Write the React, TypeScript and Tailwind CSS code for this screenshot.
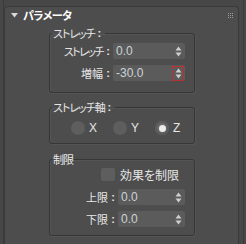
import React from "react";

const font = "[font-family:'Noto_Sans_CJK_JP','Noto_Sans',sans-serif] [font-feature-settings:'palt']";

function SpinArrows() {
  return (
    <svg width="7" height="11" viewBox="0 0 7 11" className="shrink-0">
      <path d="M3.5 0.5 L6.5 4.5 L0.5 4.5 Z" fill="#cfcfcf" />
      <path d="M3.5 10.5 L6.5 6.5 L0.5 6.5 Z" fill="#cfcfcf" />
    </svg>
  );
}

function Spinner({ value, width, focused }: { value: string; width: string; focused?: boolean }) {
  return (
    <div className={`${width} flex h-[16px] items-center justify-between rounded-[2px] bg-[#5b5b5b] pl-[3px] pr-[1px]`}>
      <span className="text-[12px] leading-none text-[#cdd3d6] [font-family:'Liberation_Sans',sans-serif]">{value}</span>
      <div
        className={`flex h-[15px] w-[12px] items-center justify-center ${
          focused ? "border border-dashed border-[#e02020]" : ""
        }`}
      >
        <SpinArrows />
      </div>
    </div>
  );
}

function Colon({ w = "w-[10px]" }: { w?: string }) {
  return <span className={`${w} text-center [font-family:'Liberation_Sans',sans-serif] font-bold`}>:</span>;
}

function Row({
  label,
  value,
  width,
  labelW,
  tight,
  focused,
}: {
  label: string;
  value: string;
  width: string;
  labelW: string;
  tight?: boolean;
  focused?: boolean;
}) {
  return (
    <div className="flex items-center text-[11px] leading-none text-[#e6e6e6]">
      <div className={`${labelW} text-right ${tight ? "tracking-[-1.5px]" : ""}`}>{label}</div>
      <Colon />
      <Spinner value={value} width={width} focused={focused} />
    </div>
  );
}

function Group({ title, colon, className, children }: { title: string; colon?: boolean; className: string; children: React.ReactNode }) {
  return (
    <fieldset className={`ml-[44px] w-[146px] rounded-[3px] border border-[#363636] shadow-[inset_1px_1px_0_#555555,1px_1px_0_#555555] ${className}`}>
      <legend className="ml-[2px] flex px-[1px] text-[11px] leading-[14px] text-[#e6e6e6]">
        <span className="tracking-[-1px]">{title}</span>
        {colon && <Colon w="w-[9px]" />}
      </legend>
      {children}
    </fieldset>
  );
}

function Radio({ label, checked }: { label: string; checked?: boolean }) {
  return (
    <div className="flex items-center gap-[4px]">
      <div
        className={`flex h-[14px] w-[14px] items-center justify-center rounded-full ${
          checked ? "bg-[#6a6a6a] shadow-[inset_0_0_0_2px_#5a5a5a]" : "bg-[#5e5e5e]"
        }`}
      >
        {checked && <div className="h-[7px] w-[7px] rounded-full bg-[#ececec]" />}
      </div>
      <span className="text-[12px] leading-none text-[#e6e6e6] [font-family:'Liberation_Sans',sans-serif]">{label}</span>
    </div>
  );
}

export default function App() {
  return (
    <div className={`relative h-[244px] w-[246px] overflow-hidden bg-[#474747] ${font}`}>
      <div className="absolute left-[3px] top-0 h-full w-px bg-[#3c3c3c]" />
      <div className="absolute left-[243px] top-0 h-full w-px bg-[#3a3a3a]" />
      <div className="ml-[4px] mt-[6px] h-[260px] w-[235px] rounded-t-[4px] border border-b-0 border-[#3a3a3a] bg-[#4d4d4d]">
        {/* header */}
        <div className="flex h-[16px] items-center pl-[6px]">
          <svg width="7" height="5" viewBox="0 0 7 5">
            <path d="M0 0 L7 0 L3.5 4.5 Z" fill="#d8d8d8" />
          </svg>
          <span className="ml-[5px] text-[11px] font-bold leading-none tracking-[-0.5px] text-white">パラメータ</span>
          <div className="ml-auto mr-[5px] grid grid-cols-3 gap-[1px]">
            {Array.from({ length: 9 }).map((_, i) => (
              <div key={i} className="h-[1px] w-[1px] bg-[#9a9a9a]" />
            ))}
          </div>
        </div>

        <Group title="ストレッチ" colon className="mt-[3px] h-[67px]">
          <div className="flex flex-col gap-[6px] pt-[3px]">
            <Row label="ストレッチ" value="0.0" width="w-[72px]" labelW="w-[53px]" tight />
            <Row label="増幅" value="-30.0" width="w-[72px]" labelW="w-[53px]" focused />
          </div>
        </Group>

        <Group title="ストレッチ軸" colon className="mt-[7px] h-[44px]">
          <div className="flex items-center gap-[16px] pl-[21px] pt-[7px]">
            <Radio label="X" />
            <Radio label="Y" />
            <Radio label="Z" checked />
          </div>
        </Group>

        <Group title="制限" className="mt-[8px] h-[84px]">
          <div className="flex items-center pl-[51px] pt-[2px]">
            <div className="h-[13px] w-[14px] rounded-[2px] bg-[#5e5e5e]" />
            <span className="ml-[5px] text-[12px] leading-none text-[#e6e6e6]">効果を制限</span>
          </div>
          <div className="mt-[8px] flex flex-col gap-[6px]">
            <Row label="上限" value="0.0" width="w-[67px]" labelW="w-[58px]" />
            <Row label="下限" value="0.0" width="w-[67px]" labelW="w-[58px]" />
          </div>
        </Group>
      </div>
    </div>
  );
}
